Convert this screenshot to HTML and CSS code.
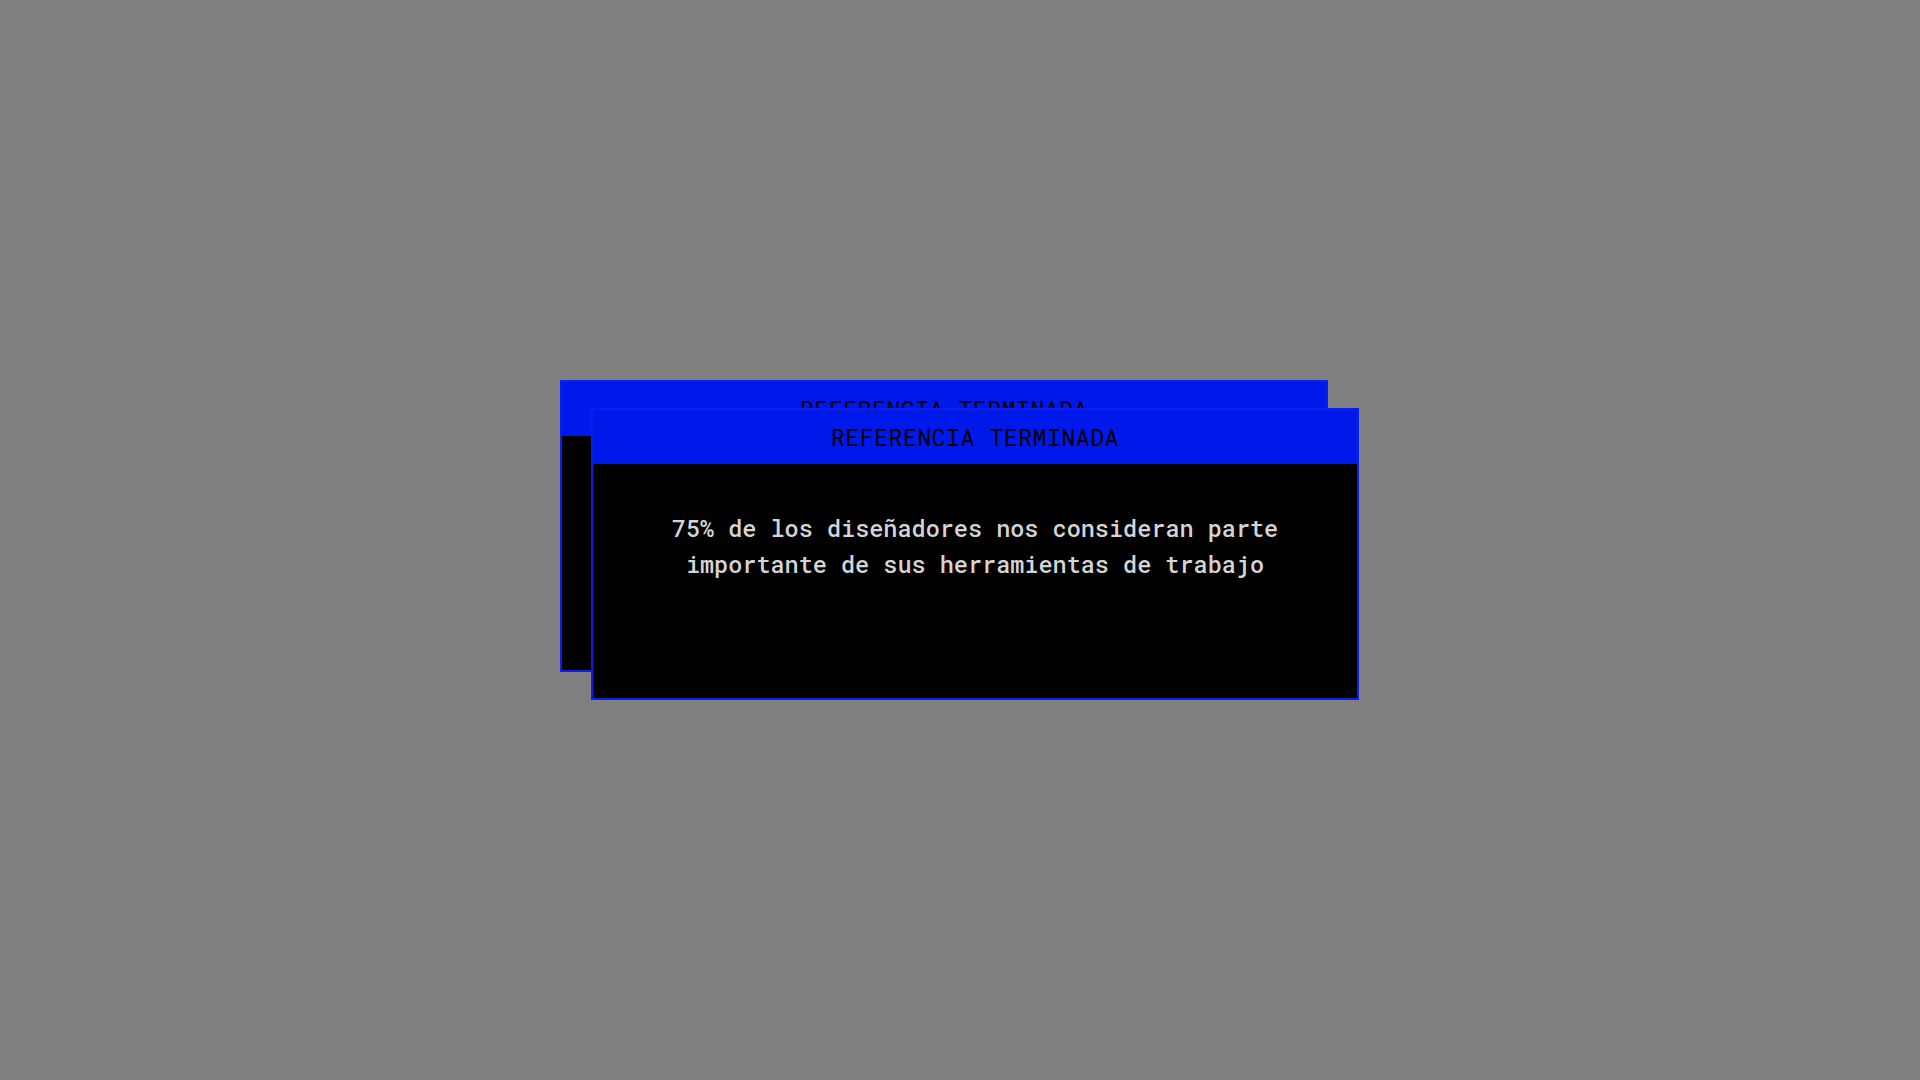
FILE: index.html
```html
<!DOCTYPE html>
<html lang="es">
<head>
<meta charset="utf-8">
<title>Referencia terminada</title>
<link rel="stylesheet" href="styles.css">
</head>
<body>
<div class="stage">
  <div class="window window-back">
    <div class="titlebar">REFERENCIA TERMINADA</div>
    <div class="body"></div>
  </div>
  <div class="window window-front">
    <div class="titlebar">REFERENCIA TERMINADA</div>
    <div class="body">
      <p class="message">75% de los diseñadores nos consideran parte<br>importante de sus herramientas de trabajo</p>
    </div>
  </div>
</div>
</body>
</html>
```
FILE: styles.css
```css
html, body {
  margin: 0;
  padding: 0;
  height: 100%;
}
body {
  background: #808080;
  display: flex;
  align-items: center;
  justify-content: center;
  font-family: "Roboto Mono", "DejaVu Sans Mono", "Liberation Mono", monospace;
}
.stage {
  position: relative;
  width: 800px;
  height: 320px;
}
.window {
  position: absolute;
  width: 768px;
  height: 292px;
  box-sizing: border-box;
  border: 2px solid #0a1ef0;
  background: #000;
  display: flex;
  flex-direction: column;
}
.window-back {
  left: 0;
  top: 0;
}
.window-front {
  left: 31px;
  top: 28px;
}
.titlebar {
  height: 54px;
  flex: none;
  background: #0019eb;
  color: #000;
  font-size: 23px;
  display: flex;
  align-items: center;
  justify-content: center;
  letter-spacing: 0.6px;
}
.body {
  flex: 1;
  background: #000;
}
.message {
  margin: 0;
  padding-top: 46px;
  text-align: center;
  color: #d4d4d4;
  font-size: 23.5px;
  font-weight: 500;
  line-height: 36px;
}
```
